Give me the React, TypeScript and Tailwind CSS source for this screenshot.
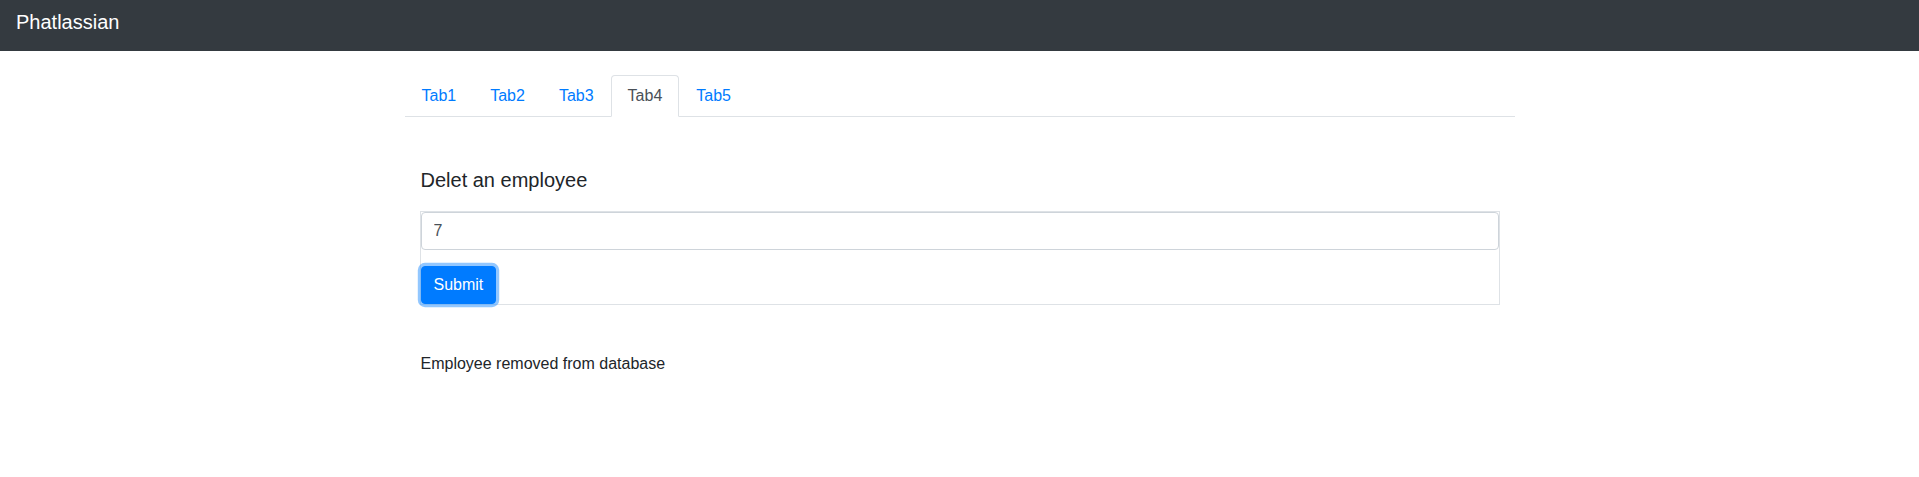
import React from "react";

const tabs = ["Tab1", "Tab2", "Tab3", "Tab4", "Tab5"];

export default function App() {
  return (
    <div
      className="min-h-[477px] bg-white text-[#212529]"
      style={{ fontFamily: '"Liberation Sans", Arial, sans-serif' }}
    >
      <nav className="h-[51px] bg-[#343a40] px-4 pt-[7px]">
        <span className="text-[20px] leading-[30px] text-white">Phatlassian</span>
      </nav>
      <div className="mx-auto w-[1110px]">
        <ul className="mt-6 flex border-b border-[#dee2e6] text-[16px] leading-[24px]">
          {tabs.map((t) => {
            const active = t === "Tab4";
            return (
              <li key={t} className="-mb-px">
                <a
                  className={
                    active
                      ? "block rounded-t-[4px] border border-[#dee2e6] border-b-white bg-white px-4 py-2 text-[#495057]"
                      : "block rounded-t-[4px] border border-transparent px-4 py-2 text-[#007bff]"
                  }
                >
                  {t}
                </a>
              </li>
            );
          })}
        </ul>
        <h5 className="mt-[51px] pl-4 text-[20px] leading-[24px]">Delet an employee</h5>
        <div className="mx-[15px] mt-[19px] border border-[#dee2e6]">
          <input
            readOnly
            value="7"
            className="block h-[38px] w-full rounded-[4px] border border-[#ced4da] px-3 text-[16px] text-[#495057] outline-none"
          />
          <button className="mt-4 block h-[38px] rounded-[4px] border border-[#007bff] bg-[#007bff] px-3 text-[16px] leading-[24px] text-white shadow-[0_0_0_3.2px_rgba(38,143,255,0.5)]">
            Submit
          </button>
        </div>
        <p className="mt-[47px] pl-4 text-[16px] leading-[24px]">Employee removed from database</p>
      </div>
    </div>
  );
}
